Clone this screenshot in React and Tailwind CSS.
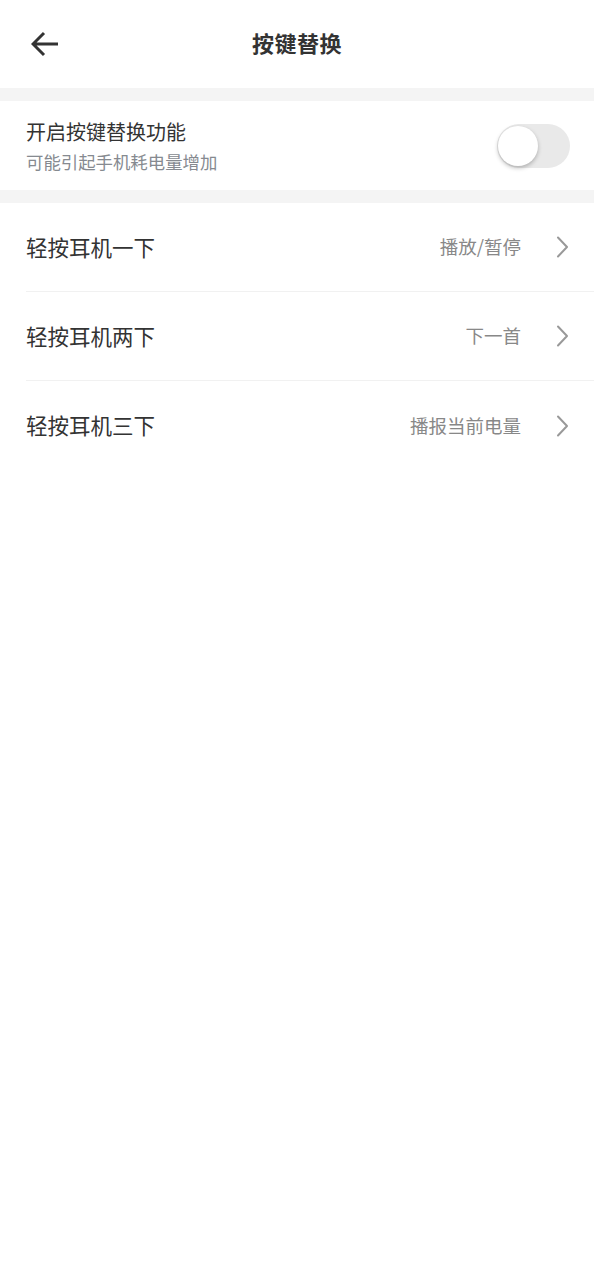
import React, { useState } from 'react';

const font = { fontFamily: '"Noto Sans CJK SC", "Noto Sans", sans-serif' };

const rows = [
    { label: '轻按耳机一下', value: '播放/暂停' },
    { label: '轻按耳机两下', value: '下一首' },
    { label: '轻按耳机三下', value: '播报当前电量' },
];

const Chevron = () => (
    <svg width="13" height="22" viewBox="0 0 13 22" fill="none" className="shrink-0">
        <path d="M2 1.5 L11 11 L2 20.5" stroke="#999999" strokeWidth="2" strokeLinecap="round" strokeLinejoin="round" />
    </svg>
);

const SettingRow = ({ label, value, last }) => (
    <div className="pl-[26px]">
        <div className={`flex items-center h-[89px] pr-[25px] ${last ? '' : 'border-b border-[#f1f1f1]'}`}>
            <span className="flex-1 text-[21.5px] text-[#333333]">{label}</span>
            <span className="text-[18.5px] text-[#888888] mr-[35px]">{value}</span>
            <Chevron />
        </div>
    </div>
);

export default function App() {
    const [enabled, setEnabled] = useState(false);

    return (
        <div className="w-[594px] min-h-[1280px] bg-white" style={font}>
            {/* Header */}
            <div className="relative flex items-center justify-center h-[88px] pb-[3px]">
                <button className="absolute left-[31px] top-[31px]">
                    <svg width="28" height="26" viewBox="0 0 28 26" fill="none">
                        <path d="M27 13 H3 M13 2 L2 13 L13 24" stroke="#333333" strokeWidth="3" strokeLinejoin="miter" />
                    </svg>
                </button>
                <h1 className="text-[22px] font-semibold text-[#333333] tracking-[0.5px]">按键替换</h1>
            </div>

            <div className="h-[13px] bg-[#f4f4f4]" />

            {/* Toggle row */}
            <div className="flex items-center h-[89px] pl-[26px] pr-[24px]">
                <div className="flex-1 flex flex-col">
                    <span className="text-[20px] leading-[28px] text-[#333333]">开启按键替换功能</span>
                    <span className="text-[17.4px] leading-[24px] mt-[4px] text-[#868a90]">可能引起手机耗电量增加</span>
                </div>
                <button
                    onClick={() => setEnabled(!enabled)}
                    className={`relative w-[73px] h-[44px] rounded-full ${enabled ? 'bg-[#3b82f6]' : 'bg-[#e9e9e9]'}`}
                >
                    <span className={`absolute top-[2px] w-[40px] h-[40px] rounded-full bg-white shadow-[0_2px_4px_rgba(0,0,0,0.25)] ${enabled ? 'left-[31px]' : 'left-[1px]'}`} />
                </button>
            </div>

            <div className="h-[13px] bg-[#f4f4f4]" />

            {rows.map((r, i) => (
                <SettingRow key={r.label} {...r} last={i === rows.length - 1} />
            ))}
        </div>
    );
}
